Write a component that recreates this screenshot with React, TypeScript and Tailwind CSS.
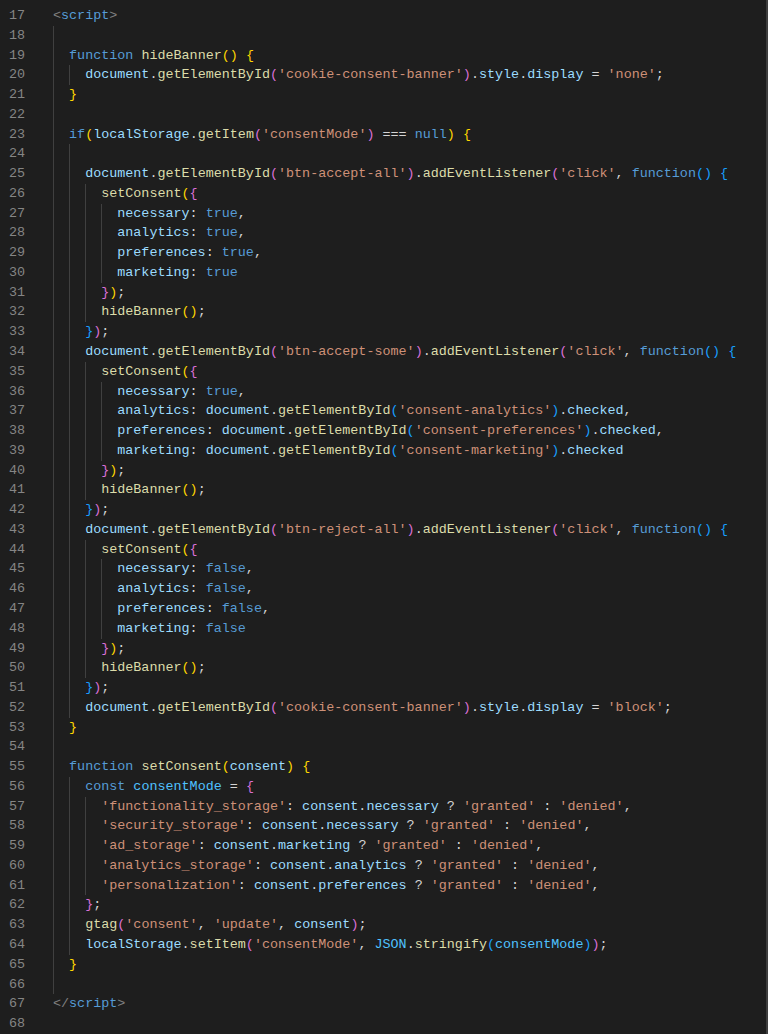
import React from "react";

const lines: string[] = [
  "<script>",
  "",
  "  function hideBanner() {",
  "    document.getElementById('cookie-consent-banner').style.display = 'none';",
  "  }",
  "",
  "  if(localStorage.getItem('consentMode') === null) {",
  "",
  "    document.getElementById('btn-accept-all').addEventListener('click', function() {",
  "      setConsent({",
  "        necessary: true,",
  "        analytics: true,",
  "        preferences: true,",
  "        marketing: true",
  "      });",
  "      hideBanner();",
  "    });",
  "    document.getElementById('btn-accept-some').addEventListener('click', function() {",
  "      setConsent({",
  "        necessary: true,",
  "        analytics: document.getElementById('consent-analytics').checked,",
  "        preferences: document.getElementById('consent-preferences').checked,",
  "        marketing: document.getElementById('consent-marketing').checked",
  "      });",
  "      hideBanner();",
  "    });",
  "    document.getElementById('btn-reject-all').addEventListener('click', function() {",
  "      setConsent({",
  "        necessary: false,",
  "        analytics: false,",
  "        preferences: false,",
  "        marketing: false",
  "      });",
  "      hideBanner();",
  "    });",
  "    document.getElementById('cookie-consent-banner').style.display = 'block';",
  "  }",
  "",
  "  function setConsent(consent) {",
  "    const consentMode = {",
  "      'functionality_storage': consent.necessary ? 'granted' : 'denied',",
  "      'security_storage': consent.necessary ? 'granted' : 'denied',",
  "      'ad_storage': consent.marketing ? 'granted' : 'denied',",
  "      'analytics_storage': consent.analytics ? 'granted' : 'denied',",
  "      'personalization': consent.preferences ? 'granted' : 'denied',",
  "    };",
  "    gtag('consent', 'update', consent);",
  "    localStorage.setItem('consentMode', JSON.stringify(consentMode));",
  "  }",
  "",
  "</script>",
  "",
];

// guides for blank lines (by index from line 17)
const blankGuides: Record<number, number> = { 1: 1, 5: 1, 7: 2, 37: 1, 49: 1, 51: 0 };

const bracketColors = ["#ffd700", "#da70d6", "#179fff"];
const keywords = new Set(["function", "const", "if"]);
const literals = new Set(["true", "false", "null"]);
const constants = new Set(["consentMode", "JSON"]);

type Tok = { t: string; c: string };

function tokenize(src: string, depth: { d: number }): Tok[] {
  if (src.trim() === "<script>")
    return [
      { t: "<", c: "#808080" },
      { t: "script", c: "#569cd6" },
      { t: ">", c: "#808080" },
    ];
  if (src.trim() === "</script>")
    return [
      { t: "</", c: "#808080" },
      { t: "script", c: "#569cd6" },
      { t: ">", c: "#808080" },
    ];
  const out: Tok[] = [];
  const re = /('[^']*')|([A-Za-z_$][\w$]*)|(===|[=?:])|([(){}])|(\s+)|(.)/g;
  let m: RegExpExecArray | null;
  let prev = "";
  while ((m = re.exec(src))) {
    const s = m[0];
    if (m[1]) out.push({ t: s, c: "#ce9178" });
    else if (m[2]) {
      const next = src[re.lastIndex];
      let c = "#9cdcfe";
      if (keywords.has(s) || literals.has(s)) c = "#569cd6";
      else if (next === "(") c = "#dcdcaa";
      else if (constants.has(s) && prev !== ".") c = "#4fc1ff";
      out.push({ t: s, c });
    } else if (m[4]) {
      if (s === "(" || s === "{") {
        out.push({ t: s, c: bracketColors[depth.d % 3] });
        depth.d++;
      } else {
        depth.d--;
        out.push({ t: s, c: bracketColors[depth.d % 3] });
      }
    } else out.push({ t: s, c: "#d4d4d4" });
    if (!m[5]) prev = s;
  }
  return out;
}

const CodeLine = ({ num, guides, toks }: { num: number; guides: number; toks: Tok[] }) => {
  return (
    <div className="flex h-[19.78px] items-center whitespace-pre">
      <span className="w-[53px] pl-[9px] text-[#858585]">{num}</span>
      <div className="flex h-full items-center">
        {Array.from({ length: guides }).map((_, i) => (
          <span key={i} className="inline-block w-[2ch] h-full border-l border-[#404040]" />
        ))}
        <span>
          {toks.map((tk, i) => (
            <span key={i} style={{ color: tk.c }}>
              {tk.t}
            </span>
          ))}
        </span>
      </div>
    </div>
  );
};

export default function App() {
  const depth = { d: 0 };
  const rows = lines.map((text, i) => {
    const lead = text.length - text.trimStart().length;
    const guides = text === "" ? blankGuides[i] ?? 0 : Math.floor(lead / 2);
    const toks = text === "" ? [] : tokenize(text.trimStart(), depth);
    return { num: 17 + i, guides, toks };
  });
  return (
    <div className="w-[768px] h-[1034px] flex flex-col bg-[#1e1e1e] overflow-hidden">
      <div
        className="flex-1 flex flex-col pt-[6px] border-r-2 border-[#3e3e3e] text-[13.4px] leading-[19.78px]"
        style={{ fontFamily: '"Liberation Mono", "DejaVu Sans Mono", monospace' }}
      >
        {rows.map((r) => (
          <CodeLine key={r.num} {...r} />
        ))}
      </div>
      <div className="h-[2px] bg-[#c9c9c9]" />
    </div>
  );
}
